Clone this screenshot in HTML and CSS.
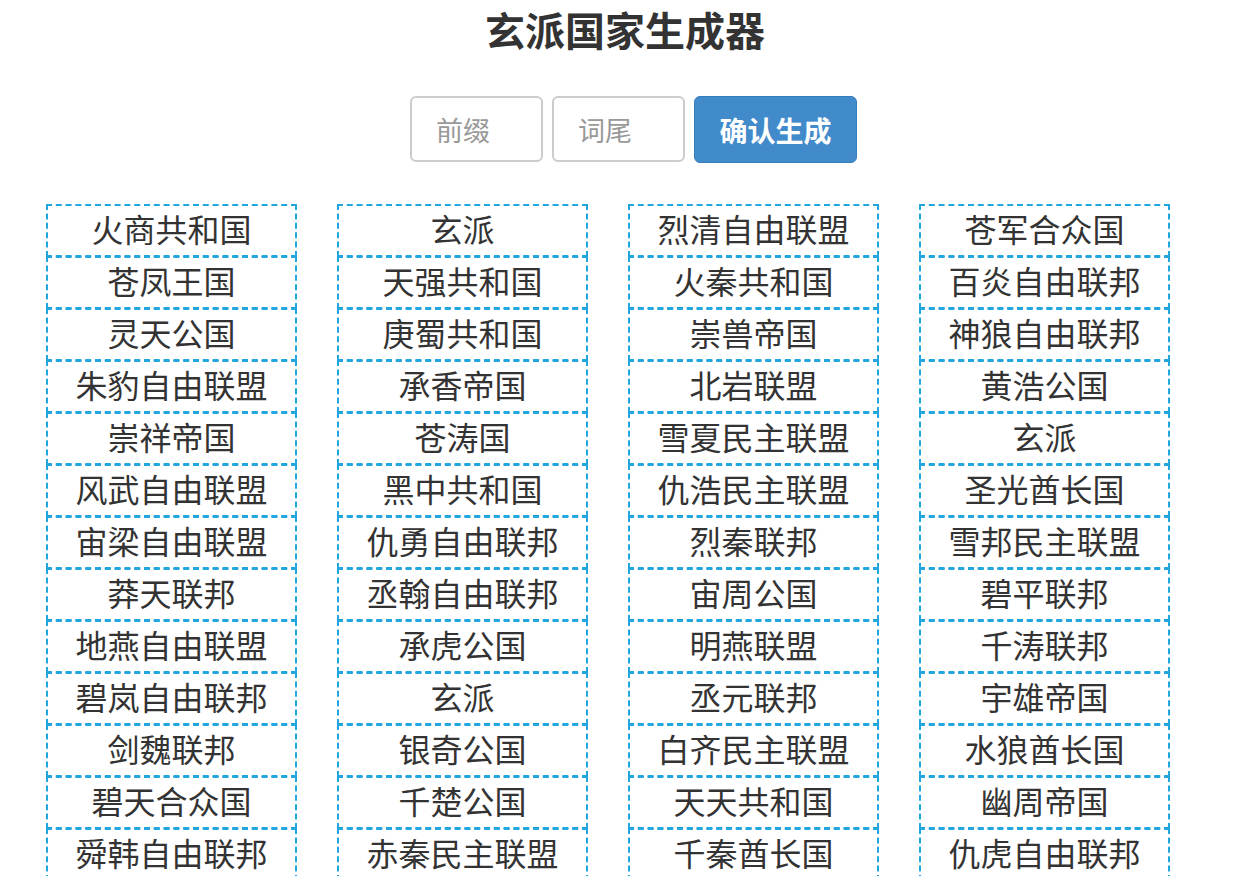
FILE: index.html
```html
<!DOCTYPE html>
<html lang="zh-CN">
<head>
<meta charset="utf-8">
<title>玄派国家生成器</title>
<link rel="stylesheet" href="styles.css">
</head>
<body>
<h1 class="title">玄派国家生成器</h1>
<div class="form">
  <input class="field" type="text" placeholder="前缀">
  <input class="field" type="text" placeholder="词尾">
  <button class="btn" type="button">确认生成</button>
</div>
<div class="grid">
  <ul class="col">
    <li>火商共和国</li><li>苍凤王国</li><li>灵天公国</li><li>朱豹自由联盟</li><li>崇祥帝国</li><li>风武自由联盟</li><li>宙梁自由联盟</li><li>莽天联邦</li><li>地燕自由联盟</li><li>碧岚自由联邦</li><li>剑魏联邦</li><li>碧天合众国</li><li>舜韩自由联邦</li>
  </ul>
  <ul class="col">
    <li>玄派</li><li>天强共和国</li><li>庚蜀共和国</li><li>承香帝国</li><li>苍涛国</li><li>黑中共和国</li><li>仇勇自由联邦</li><li>丞翰自由联邦</li><li>承虎公国</li><li>玄派</li><li>银奇公国</li><li>千楚公国</li><li>赤秦民主联盟</li>
  </ul>
  <ul class="col">
    <li>烈清自由联盟</li><li>火秦共和国</li><li>崇兽帝国</li><li>北岩联盟</li><li>雪夏民主联盟</li><li>仇浩民主联盟</li><li>烈秦联邦</li><li>宙周公国</li><li>明燕联盟</li><li>丞元联邦</li><li>白齐民主联盟</li><li>天天共和国</li><li>千秦酋长国</li>
  </ul>
  <ul class="col">
    <li>苍军合众国</li><li>百炎自由联邦</li><li>神狼自由联邦</li><li>黄浩公国</li><li>玄派</li><li>圣光酋长国</li><li>雪邦民主联盟</li><li>碧平联邦</li><li>千涛联邦</li><li>宇雄帝国</li><li>水狼酋长国</li><li>幽周帝国</li><li>仇虎自由联邦</li>
  </ul>
</div>
</body>
</html>
```

FILE: styles.css
```css
html {
  overflow: hidden;
}
body {
  margin: 0;
  background: #fff;
  color: #333;
  font-family: "Noto Sans CJK SC", "Noto Sans", sans-serif;
}
.title {
  margin: 5px 0 0;
  font-size: 40px;
  line-height: 48px;
  font-weight: 700;
  text-align: center;
  color: #333;
  padding-right: 10px;
}
.form {
  display: flex;
  justify-content: center;
  gap: 9px;
  margin-top: 43px;
  padding-left: 7px;
}
.field {
  box-sizing: border-box;
  width: 133px;
  height: 66px;
  border: 2px solid #ccc;
  border-radius: 6px;
  padding: 0 24px;
  font-family: inherit;
  font-size: 27px;
  color: #555;
  outline: none;
}
.field::placeholder {
  color: #999;
}
.btn {
  box-sizing: border-box;
  width: 163px;
  height: 67px;
  background: #428bca;
  border: 1px solid #357ebd;
  border-radius: 6px;
  color: #fff;
  font-family: inherit;
  font-size: 28px;
  font-weight: 700;
  padding: 0;
}
.grid {
  display: grid;
  grid-template-columns: repeat(4, 251px);
  column-gap: 40px;
  padding-left: 46px;
  margin-top: 41px;
}
.col {
  list-style: none;
  margin: 0;
  padding: 0;
}
.col li {
  height: 49px;
  line-height: 45px;
  border: 2px dashed #22a6df;
  margin-bottom: -1px;
  text-align: center;
  font-size: 32px;
  color: #333;
}
```
